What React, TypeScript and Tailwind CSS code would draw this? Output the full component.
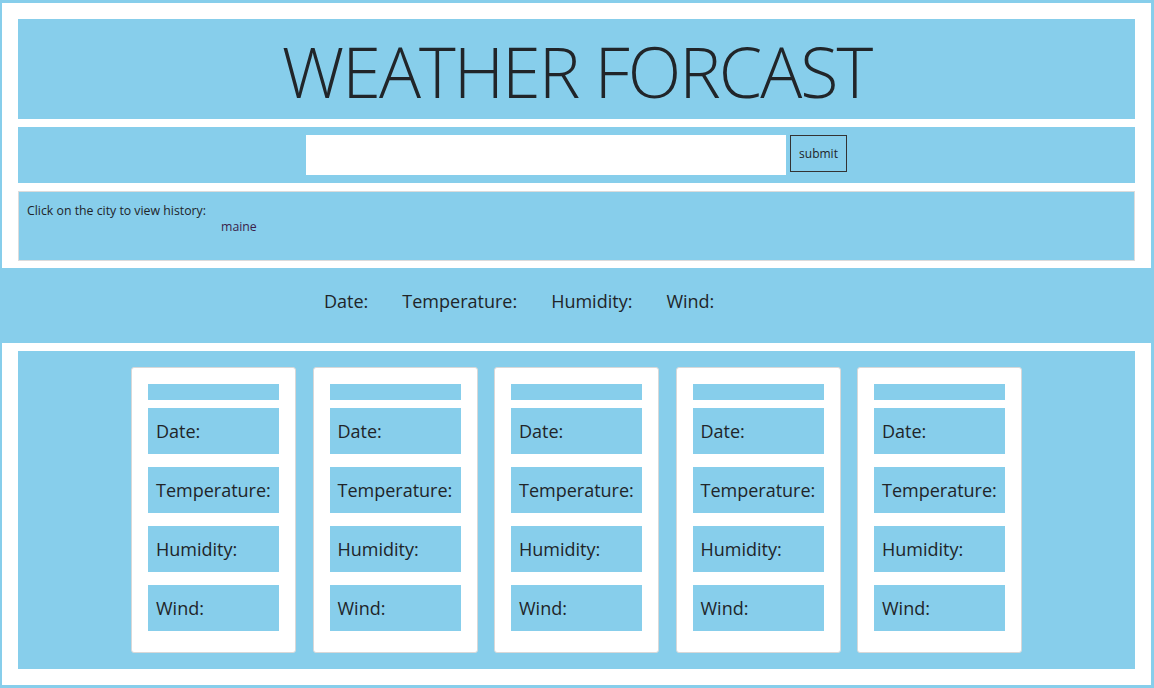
const days = [1, 2, 3, 4, 5];
const fields = ["Date:", "Temperature:", "Humidity:", "Wind:"];

export default function App() {
  return (
    <div className="min-h-[688px] bg-[#87ceeb] pt-[3px] text-[#212529] font-['Open_Sans','Noto_Sans',sans-serif]">
      {/* header, search and history */}
      <div className="ml-[2px] mr-[3px] bg-white px-4 pt-4 pb-[7px]">
        <div className="flex h-[100px] items-center justify-center bg-[#87ceeb] pt-1">
          <h1 className="text-[70px] font-light leading-none tracking-[-2px]">WEATHER FORCAST</h1>
        </div>
        <div className="mt-2 flex h-[56px] items-start justify-center gap-1 bg-[#87ceeb] py-2">
          <input type="text" className="h-10 w-[480px] bg-white outline-none" />
          <button className="h-[37px] w-[57px] border border-[#333] text-[12px]">submit</button>
        </div>
        <div className="mt-2 h-[70px] border border-[#dcdcdc] bg-[#87ceeb] px-2 pt-[11px] text-[12.3px] leading-4">
          <div>Click on the city to view history:</div>
          <div className="pl-[194px] text-[#3b1f4a]">maine</div>
        </div>
      </div>

      {/* current weather */}
      <div className="flex h-[75px] items-center gap-[34px] pb-2 pl-[324px] text-[18px]">
        <span>Date:</span>
        <span>Temperature:</span>
        <span>Humidity:</span>
        <span>Wind:</span>
      </div>

      {/* five day forecast */}
      <div className="ml-[2px] mr-[3px] bg-white px-4 pt-2 pb-4">
        <div className="flex h-[318px] justify-center gap-[16.5px] bg-[#87ceeb] pt-4">
          {days.map((d) => (
            <div key={d} className="h-[286px] w-[165px] rounded-[3px] border border-[#d8d8d8] bg-white px-4 pt-4">
              <div className="h-4 bg-[#87ceeb]" />
              <div className="mt-2 flex flex-col gap-[13px]">
                {fields.map((f) => (
                  <div key={f} className="flex h-[46px] items-center bg-[#87ceeb] pl-2 text-[18px]">
                    {f}
                  </div>
                ))}
              </div>
            </div>
          ))}
        </div>
      </div>
    </div>
  );
}
